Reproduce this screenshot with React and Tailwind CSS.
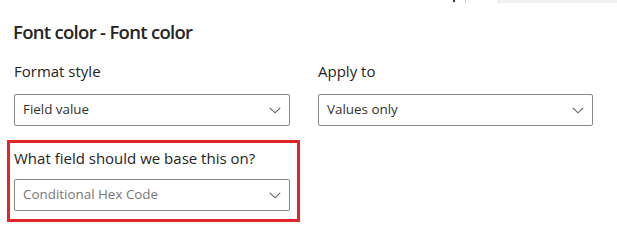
import React from "react";

function Chevron() {
  return (
    <svg width="12" height="7" viewBox="0 0 12 7" fill="none" className="shrink-0">
      <path d="M0.8 0.8 L6 5.8 L11.2 0.8" stroke="#605e5c" strokeWidth="1.1" />
    </svg>
  );
}

function Dropdown({ value, muted }) {
  return (
    <div className="flex h-[32px] items-center justify-between rounded-[2px] border border-[#8a8886] bg-white pl-[8px] pr-[8px]">
      <span className={`text-[13.4px] leading-none ${muted ? "text-[#7a7674]" : "text-[#323130]"}`}>{value}</span>
      <Chevron />
    </div>
  );
}

export default function App() {
  return (
    <div
      className="relative h-[226px] w-[617px] overflow-hidden bg-white text-[#252423]"
      style={{ fontFamily: '"Open Sans", "Noto Sans", sans-serif' }}
    >
      <div className="flex h-[3px] items-start">
        <div className="ml-[453px] h-[2px] w-[2px] bg-[#3b3a39]" />
        <div className="ml-[10px] h-[3px] w-[1px] bg-[#c8c6c4]" />
        <div className="ml-[32px] h-[3px] flex-1 border-l border-[#e1dfdd] bg-[#f3f2f1]" />
      </div>
      <div className="pl-[13px] pr-[24px]">
        <h1 className="mt-[16px] text-[18.5px] font-semibold leading-[25px] tracking-[-0.7px] text-[#252423]">Font color - Font color</h1>
        <div className="mt-[17px] grid grid-cols-[276px_275px] gap-x-[28px] pl-[1px]">
          <div>
            <div className="text-[15px] leading-[20px] text-[#252423]">Format style</div>
            <div className="mt-[13px]">
              <Dropdown value="Field value" />
            </div>
          </div>
          <div>
            <div className="text-[15px] leading-[20px] text-[#252423]">Apply to</div>
            <div className="mt-[13px]">
              <Dropdown value="Values only" />
            </div>
          </div>
        </div>
        <div className="ml-[-6px] mt-[14px] w-[293px] border-[3px] border-[#e3242b] pb-[8px] pl-[4px] pr-[7px] pt-[5px]">
          <div className="text-[15px] leading-[20px] text-[#252423]">What field should we base this on?</div>
          <div className="mt-[11px]">
            <Dropdown value="Conditional Hex Code" muted />
          </div>
        </div>
      </div>
    </div>
  );
}
